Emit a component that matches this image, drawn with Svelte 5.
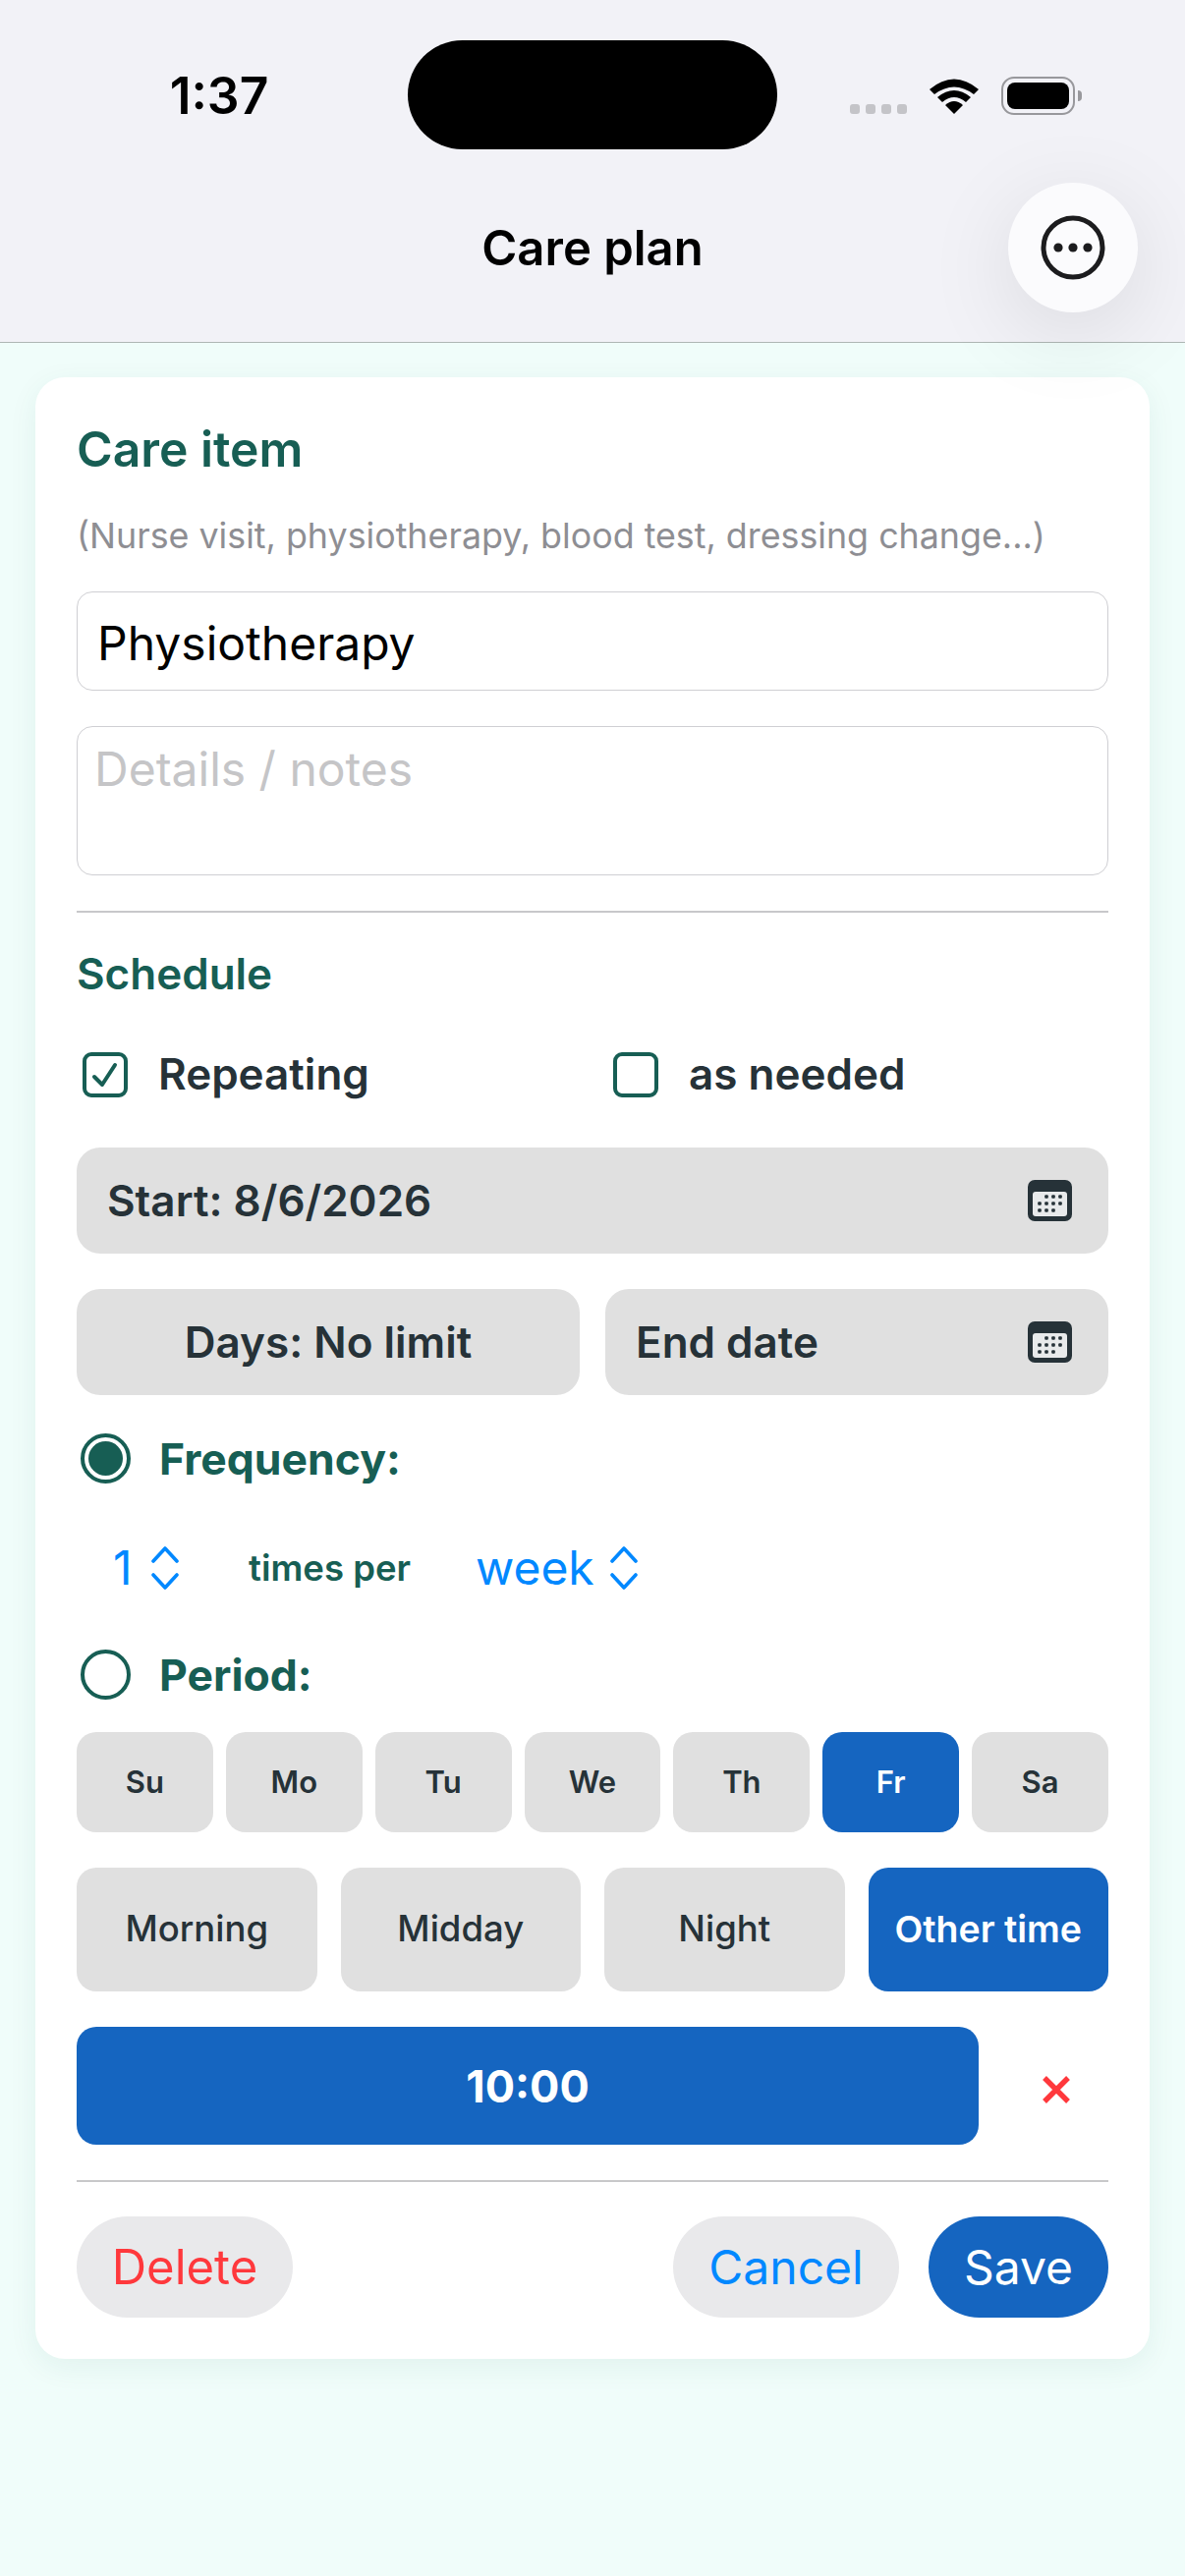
<script>
  const days = [
    { label: 'Su' }, { label: 'Mo' }, { label: 'Tu' }, { label: 'We' },
    { label: 'Th' }, { label: 'Fr', on: true }, { label: 'Sa' }
  ];
  const times = [
    { label: 'Morning' }, { label: 'Midday' }, { label: 'Night' }, { label: 'Other time', on: true }
  ];
  const dots = [
    [19, 17], [26, 17], [33, 17],
    [12, 24], [19, 24], [26, 24], [33, 24],
    [12, 31], [19, 31], [26, 31]
  ];
</script>

{#snippet calendar()}
  <svg class="cal" width="46" height="42" viewBox="0 0 46 42">
    <rect width="45" height="42" rx="7" fill="#263238" />
    <rect x="5" y="12" width="35" height="25" rx="3" fill="#e8eaeb" />
    {#each dots as [cx, cy]}
      <rect x={cx - 1.8} y={cy - 1.8} width="3.6" height="3.6" rx="1" fill="#263238" />
    {/each}
  </svg>
{/snippet}

{#snippet chevrons()}
  <svg class="chev" width="28" height="46" viewBox="0 0 28 46">
    <path d="M2 16 L14 3 L26 16 M2 30 L14 43 L26 30" fill="none" stroke="#0088ff" stroke-width="3.6" stroke-linecap="round" stroke-linejoin="round" />
  </svg>
{/snippet}

<div class="page">
  <header class="top">
    <div class="status">
      <span class="clock">1:37</span>
      <span class="island"></span>
      <div class="indicators">
        <span class="signal"><i></i><i></i><i></i><i></i></span>
        <svg width="52" height="39" viewBox="0 0 52 39">
          <path d="M1 13 Q26 -8 51 13 L46 18 Q26 3 6 18 Z" fill="#000" />
          <path d="M9 21 Q26 7 43 21 L38 26 Q26 16 14 26 Z" fill="#000" />
          <path d="M17 29 Q26 21 35 29 L26 38 Z" fill="#000" />
        </svg>
        <span class="battery"><b></b></span>
        <span class="tip"></span>
      </div>
    </div>
    <div class="nav">
      <h1>Care plan</h1>
      <button class="more" aria-label="More">
        <svg width="66" height="66" viewBox="0 0 66 66">
          <circle cx="33" cy="33" r="30" fill="none" stroke="#1c1c1e" stroke-width="5" />
          <circle cx="18" cy="33" r="4.6" fill="#1c1c1e" />
          <circle cx="33" cy="33" r="4.6" fill="#1c1c1e" />
          <circle cx="48" cy="33" r="4.6" fill="#1c1c1e" />
        </svg>
      </button>
    </div>
  </header>

  <main class="card">
    <h2 class="title">Care item</h2>
    <p class="hint">(Nurse visit, physiotherapy, blood test, dressing change...)</p>
    <input class="field one" value="Physiotherapy" />
    <textarea class="field notes" placeholder="Details / notes"></textarea>
    <hr class="rule first" />
    <h3 class="sub">Schedule</h3>

    <div class="checks">
      <label class="check">
        <svg width="46" height="46" viewBox="0 0 46 46">
          <rect x="2" y="2" width="42" height="42" rx="7" fill="none" stroke="#175e54" stroke-width="4" />
          <path d="M12 25 L20 33 L33 13" fill="none" stroke="#175e54" stroke-width="4" stroke-linecap="round" stroke-linejoin="round" />
        </svg>
        <span>Repeating</span>
      </label>
      <label class="check">
        <svg width="46" height="46" viewBox="0 0 46 46">
          <rect x="2" y="2" width="42" height="42" rx="7" fill="none" stroke="#175e54" stroke-width="4" />
        </svg>
        <span>as needed</span>
      </label>
    </div>

    <button class="grey wide start"><span>Start: 8/6/2026</span>{@render calendar()}</button>
    <div class="pair">
      <button class="grey center">Days: No limit</button>
      <button class="grey wide"><span>End date</span>{@render calendar()}</button>
    </div>

    <div class="radio freq"><span class="dot on"></span><span>Frequency:</span></div>
    <div class="stepper">
      <span class="pick num">1</span>{@render chevrons()}
      <span class="per">times per</span>
      <span class="pick week">week</span>{@render chevrons()}
    </div>
    <div class="radio period"><span class="dot"></span><span>Period:</span></div>

    <div class="days">
      {#each days as d}
        <button class="tile" class:on={d.on}>{d.label}</button>
      {/each}
    </div>
    <div class="times">
      {#each times as t}
        <button class="tile" class:on={t.on}>{t.label}</button>
      {/each}
    </div>
    <div class="timerow">
      <button class="clockbtn">10:00</button>
      <button class="remove" aria-label="Remove">
        <svg width="32" height="32" viewBox="0 0 32 32">
          <path d="M4 4 L28 28 M28 4 L4 28" fill="none" stroke="#ff383c" stroke-width="5.4" />
        </svg>
      </button>
    </div>
    <hr class="rule last" />
    <div class="actions">
      <button class="pill del">Delete</button>
      <button class="pill cancel">Cancel</button>
      <button class="pill save">Save</button>
    </div>
  </main>
</div>

<style>
  :global(body) {
    margin: 0;
    background: #f0fdfa;
  }
  * {
    box-sizing: border-box;
  }
  .page {
    min-height: 2622px;
    background: #f0fdfa;
    font-family: Inter, "Noto Sans", sans-serif;
    color: #263238;
    padding-bottom: 1px;
  }
  button {
    font-family: inherit;
    border: 0;
    padding: 0;
    cursor: pointer;
  }
  .top {
    position: relative;
    z-index: 2;
    height: 349px;
    background: #f2f2f7;
    border-bottom: 1.5px solid #aeb6b4;
  }
  .status {
    height: 186px;
    padding-top: 41px;
    display: grid;
    grid-template-columns: 415px 376px 1fr;
  }
  .clock {
    justify-self: center;
    margin: 26px 0 0 31px;
    font-size: 51.5px;
    line-height: 60px;
    font-weight: 600;
    color: #000;
  }
  .island {
    height: 111px;
    border-radius: 56px;
    background: #000;
  }
  .indicators {
    display: flex;
    align-items: flex-start;
    padding: 37px 0 0 74px;
  }
  .signal {
    display: flex;
    gap: 6px;
    margin: 28px 22px 0 0;
  }
  .signal i {
    width: 10px;
    height: 10px;
    border-radius: 3px;
    background: #c4c4c8;
  }
  .battery {
    width: 75px;
    height: 39px;
    margin-left: 22px;
    padding: 4px;
    border: 2.5px solid #98989c;
    border-radius: 13px;
  }
  .battery b {
    display: block;
    height: 100%;
    border-radius: 8px;
    background: #000;
  }
  .tip {
    width: 4px;
    height: 11px;
    margin: 14px 0 0 3px;
    border-radius: 0 4px 4px 0;
    background: #98989c;
  }
  .nav {
    position: relative;
    height: 161px;
    display: flex;
    justify-content: center;
    padding-top: 37px;
  }
  h1 {
    margin: 0;
    font-size: 49px;
    line-height: 60px;
    font-weight: 600;
    color: #000;
  }
  .more {
    position: absolute;
    left: 1026px;
    top: 0;
    width: 132px;
    height: 132px;
    border-radius: 50%;
    background: #fbfbfd;
    display: flex;
    align-items: center;
    justify-content: center;
    box-shadow: 0 20px 90px rgba(0, 0, 0, 0.1);
  }
  .card {
    margin: 35px 36px 0;
    padding: 43px 42px 42px;
    background: #fff;
    border-radius: 30px;
    box-shadow: 0 8px 30px rgba(23, 94, 84, 0.07);
  }
  .title {
    margin: 0;
    font-size: 49.8px;
    line-height: 60px;
    font-weight: 600;
    color: #175e54;
  }
  .hint {
    margin: 38px 0 0;
    font-size: 35.8px;
    line-height: 40px;
    color: #8e8e93;
  }
  .field {
    display: block;
    width: 100%;
    border: 1.5px solid #cfcfd3;
    border-radius: 16px;
    background: #fff;
    font-family: inherit;
    color: #000;
    outline: none;
  }
  .one {
    height: 101px;
    margin-top: 37px;
    padding: 3px 20px 0;
    font-size: 48px;
  }
  .notes {
    height: 152px;
    margin-top: 36px;
    padding: 13px 17px;
    font-size: 48px;
    line-height: 60px;
    resize: none;
  }
  .notes::placeholder {
    color: #c5c5c7;
  }
  .rule {
    margin: 36px 0 0;
    height: 2px;
    border: 0;
    background: #c8c8ca;
  }
  .sub {
    margin: 37px 0 0;
    font-size: 44px;
    line-height: 50px;
    font-weight: 600;
    color: #175e54;
  }
  .checks {
    display: grid;
    grid-template-columns: 540px 1fr;
    height: 50px;
    margin-top: 52px;
    padding-left: 6px;
  }
  .check {
    display: flex;
    align-items: center;
    gap: 31px;
    font-size: 44px;
    font-weight: 600;
  }
  .check span {
    margin-top: -2px;
  }
  .grey {
    height: 108px;
    border-radius: 24px;
    background: #e0e0e0;
    color: #263238;
    font-size: 44px;
    font-weight: 600;
  }
  .wide {
    display: flex;
    align-items: center;
    justify-content: space-between;
    padding: 0 36px 0 31px;
  }
  .start {
    width: 100%;
    margin-top: 50px;
  }
  .pair {
    display: grid;
    grid-template-columns: 1fr 1fr;
    gap: 26px;
    margin-top: 36px;
  }
  .radio {
    display: flex;
    align-items: center;
    gap: 29px;
    height: 51px;
    padding-left: 4px;
    font-size: 44.5px;
    font-weight: 700;
    color: #175e54;
  }
  .freq {
    margin-top: 39px;
  }
  .period {
    margin-top: 53px;
  }
  .dot {
    width: 51px;
    height: 51px;
    border: 4px solid #175e54;
    border-radius: 50%;
    background: #fff;
  }
  .dot.on {
    padding: 4px;
    background: #175e54 content-box;
  }
  .stepper {
    display: flex;
    align-items: center;
    height: 60px;
    margin-top: 56px;
    padding-left: 37px;
  }
  .pick {
    font-size: 48px;
    line-height: 60px;
    color: #0088ff;
  }
  .num {
    width: 39px;
  }
  .week {
    margin-left: 66px;
    width: 137px;
  }
  .per {
    margin-left: 71px;
    font-size: 36.5px;
    font-weight: 600;
    color: #175e54;
  }
  .days {
    display: flex;
    gap: 13px;
    margin-top: 33px;
  }
  .days .tile {
    height: 102px;
    font-size: 31px;
    font-weight: 600;
    padding-bottom: 2px;
  }
  .times {
    display: flex;
    gap: 24px;
    margin-top: 36px;
  }
  .times .tile {
    height: 126px;
    font-size: 36.5px;
    padding-bottom: 2px;
  }
  .times .tile.on {
    font-size: 37.5px;
    font-weight: 600;
  }
  .tile {
    flex: 1 1 0;
    min-width: 0;
    border-radius: 20px;
    background: #e0e0e0;
    color: #263238;
    font-weight: 500;
  }
  .tile.on {
    background: #1565c0;
    color: #fff;
  }
  .timerow {
    display: flex;
    align-items: center;
    margin-top: 36px;
  }
  .clockbtn {
    width: 918px;
    height: 120px;
    border-radius: 20px;
    background: #1565c0;
    color: #fff;
    font-size: 45px;
    font-weight: 700;
  }
  .remove {
    flex: 1;
    display: flex;
    justify-content: center;
    margin-top: 8px;
    padding-left: 26px;
    background: none;
  }
  .actions {
    display: flex;
    gap: 30px;
    margin-top: 35px;
  }
  .pill {
    height: 103px;
    border-radius: 52px;
    font-size: 48px;
    background: #e9e9eb;
  }
  .del {
    width: 220px;
    margin-right: auto;
    font-size: 49px;
    color: #ff383c;
  }
  .cancel {
    width: 230px;
    color: #0088ff;
  }
  .save {
    width: 183px;
    background: #1565c0;
    color: #fff;
  }
</style>
